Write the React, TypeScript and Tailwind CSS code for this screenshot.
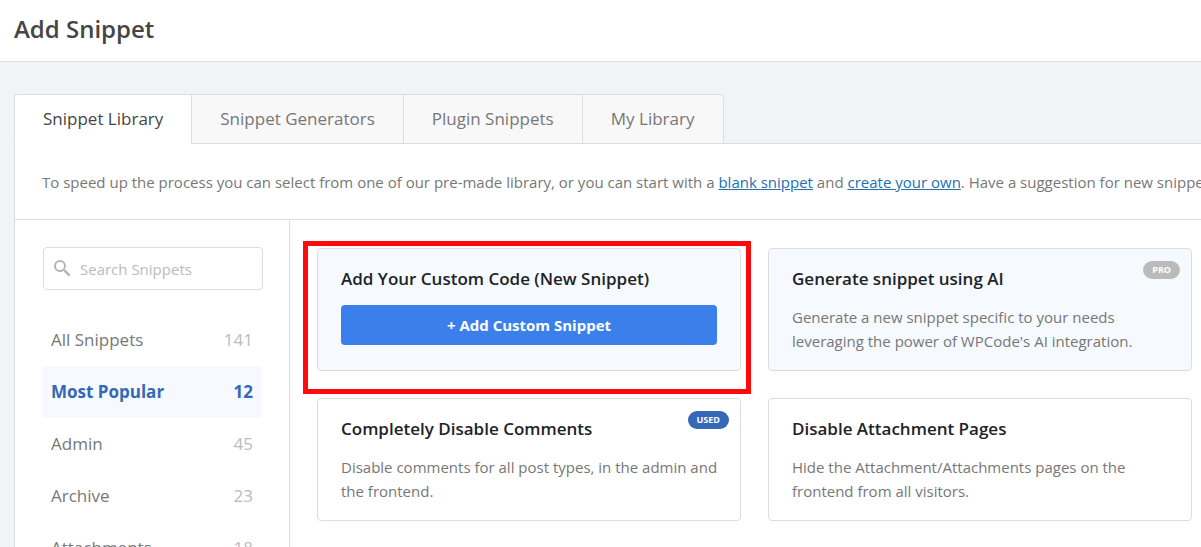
import type { ReactNode } from "react";

const tabs = ["Snippet Library", "Snippet Generators", "Plugin Snippets", "My Library"];

const categories = [
  { name: "All Snippets", count: 141 },
  { name: "Most Popular", count: 12 },
  { name: "Admin", count: 45 },
  { name: "Archive", count: 23 },
  { name: "Attachments", count: 18 },
];

function SearchIcon() {
  return (
    <svg viewBox="0 0 17 17" className="size-[17px] shrink-0" fill="#b5b5b5" aria-hidden="true">
      <path
        fillRule="evenodd"
        d="M6 0a6 6 0 1 0 3.700 10.700l.4.4v.8L14.900 16.600 16.600 14.900 11.900 10.100H11l-.4-.4A6 6 0 0 0 6 0Zm0 2a4 4 0 1 1 0 8a4 4 0 0 1 0-8Z"
      />
    </svg>
  );
}

type CardProps = {
  title: string;
  tinted?: boolean;
  badge?: string;
  badgeMuted?: boolean;
  highlighted?: boolean;
  children: ReactNode;
};

function Card({ title, tinted, badge, badgeMuted, highlighted, children }: CardProps) {
  return (
    <article
      className={`relative min-h-[123px] rounded border border-[#dddddd] pt-[18px] pr-4 pb-4 pl-[23px] ${
        tinted ? "bg-[#f6f9fe]" : "bg-white"
      }`}
    >
      <h2 className="text-[17px] leading-6 font-semibold text-[#1d2327]">{title}</h2>
      {children}
      {badge && (
        <span
          className={`absolute top-3 right-[11px] rounded-full px-[9px] text-[9px] leading-[18px] font-bold text-white ${
            badgeMuted ? "bg-[#bbbbbb]" : "bg-[#3568b7]"
          }`}
        >
          {badge}
        </span>
      )}
      {highlighted && (
        <div className="pointer-events-none absolute -top-2 -right-[11px] -bottom-6 -left-[15px] border-5 border-[#ff0a0a]" />
      )}
    </article>
  );
}

function Description({ children }: { children: ReactNode }) {
  return <p className="mt-[14px] text-[15px] leading-6 text-[#777777]">{children}</p>;
}

export default function App() {
  return (
    <div className="h-screen overflow-hidden bg-[#f2f3f5] font-['Open_Sans','Noto_Sans',sans-serif]">
      <header className="border-b border-[#dddddd] bg-white px-[14px] pt-[13px] pb-4">
        <h1 className="text-2xl font-semibold text-[#454545]">Add Snippet</h1>
      </header>

      <main className="pt-8 pl-[14px]">
        <nav className="flex">
          {tabs.map((tab, i) => (
            <button
              key={tab}
              type="button"
              className={`relative h-[50px] min-w-[142px] border-t border-b border-l border-[#dddddd] px-7 text-[17px] leading-6 first:rounded-tl last:rounded-tr last:border-r ${
                i === 0 ? "z-10 border-b-white bg-white text-[#454545]" : "bg-[#f8f8f8] text-[#777777]"
              }`}
            >
              {tab}
            </button>
          ))}
        </nav>

        <section className="-mt-px border-t border-l border-[#dddddd] bg-white">
          <p className="overflow-hidden border-b border-[#dddddd] px-[27px] pt-[26px] pb-[25px] text-[15px] leading-6 whitespace-nowrap text-[#777777]">
            To speed up the process you can select from one of our pre-made library, or you can start with a{" "}
            <a href="#blank" className="text-[#2271b1] underline">blank snippet</a> and{" "}
            <a href="#create" className="text-[#2271b1] underline">create your own</a>. Have a suggestion for new
            snippets?
          </p>

          <div className="flex">
            <aside className="w-[275px] shrink-0 border-r border-[#dddddd] pt-[27px] pr-[26px] pl-7">
              <label className="flex h-[43px] items-center gap-[9px] rounded border border-[#dddddd] px-[10px]">
                <SearchIcon />
                <input
                  type="search"
                  aria-label="Search Snippets"
                  placeholder="Search Snippets"
                  className="w-full min-w-0 bg-transparent text-[15px] leading-6 text-[#454545] outline-none placeholder:text-[#bbbbbb]"
                />
              </label>
              <ul className="mt-6 mr-px -ml-px">
                {categories.map(({ name, count }, i) => (
                  <li key={name}>
                    <button
                      type="button"
                      className={`flex h-[52px] w-full items-center justify-between px-[9px] text-[17px] leading-6 ${
                        i === 1 ? "bg-[#f6f9fe] font-bold text-[#3568b7]" : "text-[#777777]"
                      }`}
                    >
                      <span>{name}</span>
                      <span className={i === 1 ? "" : "text-[#bbbbbb]"}>{count}</span>
                    </button>
                  </li>
                ))}
              </ul>
            </aside>

            <div className="grid flex-1 grid-cols-2 content-start gap-[27px] pt-7 pr-[9px] pb-7 pl-[27px]">
              <Card title="Add Your Custom Code (New Snippet)" tinted highlighted>
                <div className="mt-[14px] pr-[7px]">
                  <button
                    type="button"
                    className="h-10 w-full rounded bg-[#3b7fea] text-[15px] leading-6 font-bold text-white"
                  >
                    + Add Custom Snippet
                  </button>
                </div>
              </Card>
              <Card title="Generate snippet using AI" tinted badge="PRO" badgeMuted>
                <Description>
                  Generate a new snippet specific to your needs leveraging the power of WPCode&apos;s AI integration.
                </Description>
              </Card>
              <Card title="Completely Disable Comments" badge="USED">
                <Description>Disable comments for all post types, in the admin and the frontend.</Description>
              </Card>
              <Card title="Disable Attachment Pages">
                <Description>
                  Hide the Attachment/Attachments pages on the frontend from all visitors.
                </Description>
              </Card>
            </div>
          </div>
        </section>
      </main>
    </div>
  );
}
